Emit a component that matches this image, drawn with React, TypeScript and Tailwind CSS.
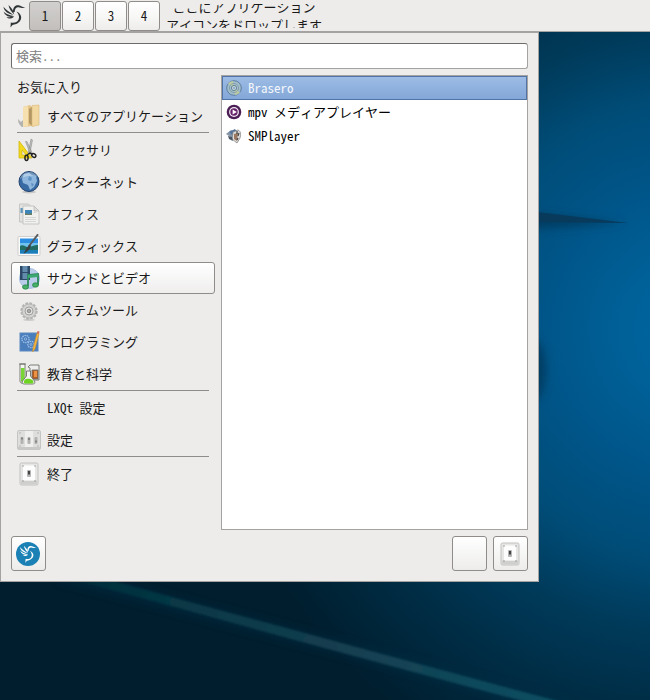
import React, { useState } from "react";

type IconName =
  | "folder" | "tools" | "globe" | "office" | "graphics" | "media" | "gear"
  | "dev" | "science" | "settings" | "exit" | "none";

function Bird({ className, color }: { className: string; color: string }) {
  return (
    <svg viewBox="0 0 24 24" className={className} aria-hidden="true">
      <g fill={color}>
        <path d="M1.500 2.500C3 5.500 7 7.500 11.500 11C7 10 2 8 1.500 2.500z" />
        <path d="M6.500 1C9 3.500 11.500 6 12.200 10.500C9.500 8 7 5 6.500 1z" />
        <path d="M1.600 7.500C4 10.500 8 11 12 12.200C9 14 3 12.500 1.600 7.500z" />
        <path d="M4.500 13C7 13.500 9.500 13.200 12 12.500C10 15 6.500 15.200 4.500 13z" />
        <path d="M11 8C10.800 3.500 13 1 16 1.200C18.200 1.300 19.500 2.800 23.500 3.800C21 4 19 4.200 17.500 3.600C15 2.800 13 4 12.600 8z" />
        <path d="M14.500 7.500C19 9.500 20.500 13.500 18 17C16 20 12.500 20.500 10.500 21L8.500 23.500L8.800 18.500C12 19 14.500 18.500 16 16.500C18 13.500 17 10.500 14.500 7.500z" />
      </g>
    </svg>
  );
}

function Plate() {
  return (
    <g>
      <rect x="3" y="1" width="18" height="22" rx="1.500" fill="#e6e6e5" stroke="#c2c2c1" />
      <rect x="4" y="18.500" width="16" height="4" fill="#cfcfce" />
      <rect x="6" y="3.500" width="12" height="15" fill="#fdfdfd" />
      <rect x="10" y="8" width="4" height="7" rx="1" fill="#b5b5b5" />
      <rect x="11" y="9" width="2" height="3.500" fill="#444" />
      <g fill="#999">
        <circle cx="6" cy="4" r=".8" /><circle cx="18" cy="4" r=".8" />
        <circle cx="6" cy="19" r=".8" /><circle cx="18" cy="19" r=".8" />
      </g>
    </g>
  );
}

function CategoryIcon({ name }: { name: IconName }) {
  return (
    <svg viewBox="0 0 24 24" className="size-6 shrink-0" aria-hidden="true">
      {name === "folder" && (
        <g>
          <path d="M1 15l3 3 3-3v8H5c-3-2-4-5-4-8z" fill="#b2b2b0" />
          <path d="M6 3l7-2 2 2v19l-9 1z" fill="#e6c488" />
          <path d="M6 3l5-1v20l-5 1z" fill="#f6e0b0" />
          <path d="M12 5l3-2v19l-3-3z" fill="#b39765" />
          <path d="M15 1.500l7-.5v20l-7 1.500z" fill="#f3d7a0" stroke="#d9b878" strokeWidth=".6" />
        </g>
      )}
      {name === "tools" && (
        <g>
          <path d="M2 3l13 17H2z" fill="#f2d81e" stroke="#d3b70c" strokeWidth=".8" />
          <path d="M5 12l4 5H5z" fill="#edecea" stroke="#c9ac08" strokeWidth=".6" />
          <path d="M14 1l1.500 1-2.500 13-2 1zM8.500 3.500l1.500 0 5 11-1.500 2z" fill="#b9bcba" stroke="#858886" strokeWidth=".5" />
          <ellipse cx="9.500" cy="19.800" rx="1.600" ry="2.600" fill="none" stroke="#222" strokeWidth="1.500" />
          <ellipse cx="16.800" cy="17.500" rx="2.200" ry="1.700" transform="rotate(35 16.800 17.500)" fill="none" stroke="#222" strokeWidth="1.400" />
          <path d="M10 17l3-2 2 1" stroke="#222" strokeWidth="1.400" fill="none" />
        </g>
      )}
      {name === "globe" && (
        <g>
          <ellipse cx="12" cy="22" rx="7" ry="1.500" fill="#c9c8c6" />
          <circle cx="12" cy="11.500" r="10" fill="#386aa3" stroke="#21436f" />
          <path d="M7 4l5-1 3 2 4 1 1 5-3 6-4 3-2-5-5-2-1-4z" fill="#8fb7dd" />
          <path d="M12 6l3 2-1 3-3-1zM14 13l3 1-2 3z" fill="#5d90c4" />
          <path d="M3 9c1-4 5-7 9-7s7 2 9 5c-5-2-12-2-18 2z" fill="#fff" opacity=".3" />
        </g>
      )}
      {name === "office" && (
        <g stroke="#b8b8b6" strokeWidth=".7">
          <path d="M2.500 2h9l2 2v16h-11z" fill="#e2e2e1" />
          <rect x="3.500" y="6" width="3" height="5" fill="#5e97bd" stroke="none" />
          <path d="M6 4h11l5 5v13H6z" fill="#f0f0ef" />
          <path d="M17 4v5h5z" fill="#dcdcda" />
          <rect x="8" y="8" width="7" height="5" fill="#3d84b8" stroke="none" />
          <path d="M8 11l3 1 4-1v2H8z" fill="#6b7d63" stroke="none" />
          <path d="M8 15.500h11M8 17.500h11M8 19.500h11M16.500 10.500h3" stroke="#ccc" />
        </g>
      )}
      {name === "graphics" && (
        <g>
          <rect x="1" y="2.500" width="22" height="19" rx="1" fill="#fbfbfb" stroke="#cfcfcd" />
          <rect x="3" y="4.500" width="18" height="15" fill="#2c8ee0" />
          <path d="M3 9h18v4H3z" fill="#6fc2ee" />
          <path d="M3 12c3-2 5 1 8 1s6-2 10-2v8H3z" fill="#216c63" />
          <path d="M3 16h18v3.500H3z" fill="#1b7eb8" />
          <path d="M20.500 1L12 12" stroke="#555a5c" strokeWidth="2" strokeLinecap="round" />
          <path d="M13 10.500l-3.500 3.500-3 6 5.500-4 2-4z" fill="#3a3f42" />
        </g>
      )}
      {name === "media" && (
        <g>
          <circle cx="12.500" cy="12.500" r="10" fill="#b9cdeb" stroke="#a5bce0" />
          <path d="M3 0h10v14H3z" fill="#2c4a68" />
          <path d="M5.500 0h5v6h-5zM5.500 7h5v6h-5z" fill="#628bad" />
          <path d="M11 20V9l10-1v11" fill="none" stroke="#2d8a5b" strokeWidth="1.800" />
          <path d="M11 9l10-1v3l-10 1z" fill="#3ba871" />
          <ellipse cx="8.500" cy="21" rx="3" ry="2.200" fill="#45b166" stroke="#237c45" strokeWidth=".7" />
          <ellipse cx="18.500" cy="19" rx="3" ry="2.200" fill="#45b166" stroke="#237c45" strokeWidth=".7" />
        </g>
      )}
      {name === "gear" && (
        <g>
          <ellipse cx="12" cy="21.800" rx="6" ry="1.200" fill="#cfcecc" />
          <circle cx="12" cy="13" r="7.600" fill="#dadad9" stroke="#b4b4b3" strokeWidth="2.200" strokeDasharray="2.600 1.400" />
          <circle cx="12" cy="13" r="7" fill="#d2d2d1" stroke="#ababaa" strokeWidth=".7" />
          <circle cx="12" cy="13" r="4" fill="#e4e4e3" stroke="#a0a09f" />
          <circle cx="12" cy="13" r="1.800" fill="#aaa" stroke="#777" strokeWidth=".7" />
        </g>
      )}
      {name === "dev" && (
        <g>
          <rect x="3" y="3" width="18" height="18" fill="#4a7dbb" stroke="#5b88bf" />
          <g fill="none" stroke="#9dbfe4">
            <circle cx="8.500" cy="9" r="3.600" strokeDasharray="1.500 .7" strokeWidth="1.300" /><circle cx="8.500" cy="9" r="1.200" strokeWidth=".8" />
            <circle cx="14" cy="14.500" r="3.200" strokeDasharray="1.500 .7" strokeWidth="1.200" /><circle cx="14" cy="14.500" r="1" strokeWidth=".8" />
          </g>
          <path d="M20 3l2 1-4 15-2.500 3 .5-4z" fill="#f5b43b" stroke="#c98b2f" strokeWidth=".5" />
          <path d="M20 3l.5-2 2 .5L22 4z" fill="#d86a5a" />
        </g>
      )}
      {name === "science" && (
        <g stroke="#6d706b" strokeWidth=".9">
          <path d="M2 2h7M3 2h5v17c0 3-5 3-5 0V4z" fill="#f4f6f2" />
          <path d="M4 6h3.500v13c0 1.500-3.500 1.500-3.500 0z" fill="#77d534" stroke="none" />
          <path d="M11 5l2-2h9v15h-9V6z" fill="#eee" />
          <path d="M15 8h6v9h-6z" fill="#b45b20" />
          <path d="M17 9h3v6h-3z" fill="#eb9144" stroke="none" />
          <path d="M9.500 9h4v5l4 5c1 2 0 3-2 3h-8c-2 0-3-1-2-3l4-5z" fill="#f2f4ef" />
          <path d="M7.500 18c3-2 5-1 8 0l1 2c0 1.500-1 1.500-2 1.500h-6c-2 0-2-1-1-3.500z" fill="#6dd521" stroke="none" />
        </g>
      )}
      {name === "settings" && (
        <g>
          <rect x=".5" y="2.500" width="23" height="19" rx="1.500" fill="#dededc" stroke="#c5c5c3" />
          <path d="M8 3h8v16H8z" fill="#efefed" />
          <path d="M1 19h22v2.500H1z" fill="#c8c8c6" />
          <g fill="#b3b3b2"><rect x="3.500" y="9" width="3" height="7" rx="1" /><rect x="10.500" y="9" width="3" height="7" rx="1" /><rect x="17.500" y="9" width="3" height="7" rx="1" /></g>
          <path d="M5 9.500v2M12 10v2M19 12.500v2" stroke="#777" strokeWidth="1.500" />
          <g fill="#b0b0af"><circle cx="3" cy="5" r=".8" /><circle cx="21" cy="5" r=".8" /><circle cx="3" cy="18" r=".8" /><circle cx="21" cy="18" r=".8" /></g>
        </g>
      )}
      {name === "exit" && <Plate />}
    </svg>
  );
}

function AppIcon({ name }: { name: string }) {
  return (
    <svg viewBox="0 0 16 16" className="size-4 shrink-0" aria-hidden="true">
      {name === "Brasero" && (
        <g fill="none">
          <circle cx="8" cy="8" r="7.300" fill="#a3bdcb" stroke="#567899" strokeWidth=".9" />
          <path d="M8 8L2 3.500A7 7 0 0 1 7 1z" fill="#bccba5" />
          <path d="M8 8l6 4.500A7 7 0 0 1 9 15z" fill="#bccba5" />
          <circle cx="8" cy="8" r="4.600" stroke="#7393a5" strokeWidth=".7" />
          <circle cx="8" cy="8" r="2.600" fill="#c5d6d6" stroke="#5b7b93" strokeWidth=".9" />
          <circle cx="8" cy="8" r="1" fill="#7ba0c9" />
        </g>
      )}
      {name === "mpv メディアプレイヤー" && (
        <g>
          <circle cx="8" cy="8" r="7.300" fill="#4b1e55" />
          <circle cx="8" cy="8" r="4.900" fill="#f3edf4" />
          <circle cx="8" cy="8" r="3.700" fill="#672169" />
          <path d="M6.600 5.400v5.200L10.800 8z" fill="#fff" />
        </g>
      )}
      {name === "SMPlayer" && (
        <g>
          <path d="M0 6l5-4 5 2-1 8z" fill="#8797a8" />
          <path d="M3 4l6-3 2 3-5 3z" fill="#55779f" />
          <path d="M7 4l5-2c3 1 3 5 2 8l-3 5-5-4z" fill="#ddd" stroke="#777" strokeWidth=".7" />
          <path d="M8 6l4-1-1 8-3-2z" fill="#9b7860" />
          <path d="M11 3v3M13 5l-1 3M12 10l-1 2" stroke="#444" strokeWidth="1.200" />
          <path d="M2 8l4 1 1 4-4-2z" fill="#4a5663" />
        </g>
      )}
    </svg>
  );
}

function Wallpaper() {
  return (
    <svg viewBox="0 0 650 700" preserveAspectRatio="xMidYMid slice" className="absolute inset-0 size-full" aria-hidden="true">
      <defs>
        <radialGradient id="glow" gradientUnits="userSpaceOnUse" cx="690" cy="330" r="480">
          <stop offset="0" stopColor="#0066a0" />
          <stop offset=".13" stopColor="#006199" />
          <stop offset=".31" stopColor="#005588" />
          <stop offset=".48" stopColor="#004c77" />
          <stop offset=".62" stopColor="#003b5b" />
          <stop offset=".8" stopColor="#002c44" />
          <stop offset="1" stopColor="#001e2e" />
        </radialGradient>
        <linearGradient id="ray" gradientUnits="userSpaceOnUse" x1="80" y1="582" x2="560" y2="700">
          <stop offset="0" stopColor="#022c3a" />
          <stop offset=".2" stopColor="#073845" />
          <stop offset=".55" stopColor="#153f50" />
          <stop offset="1" stopColor="#0c4e62" />
        </linearGradient>
        <filter id="soft" x="-50%" y="-50%" width="200%" height="200%"><feGaussianBlur stdDeviation="4" /></filter>
        <filter id="edge"><feGaussianBlur stdDeviation="1" /></filter>
      </defs>
      <rect width="650" height="700" fill="url(#glow)" />
      <path d="M520 212L625 223L520 230z" fill="#013d63" filter="url(#soft)" />
      <path d="M520 210L628 223L520 222z" fill="#083a5c" />
      <ellipse cx="532" cy="370" rx="14" ry="32" fill="#003d63" filter="url(#soft)" />
      <path d="M60 574Q360 654 570 708" fill="none" stroke="#00304a" strokeWidth="14" opacity=".4" filter="url(#soft)" />
      <path d="M60 571Q340 648 570 709" fill="none" stroke="url(#ray)" strokeWidth="9" filter="url(#edge)" />
    </svg>
  );
}

const groups: { icon: IconName; label: string }[][] = [
  [{ icon: "folder", label: "すべてのアプリケーション" }],
  [
    { icon: "tools", label: "アクセサリ" },
    { icon: "globe", label: "インターネット" },
    { icon: "office", label: "オフィス" },
    { icon: "graphics", label: "グラフィックス" },
    { icon: "media", label: "サウンドとビデオ" },
    { icon: "gear", label: "システムツール" },
    { icon: "dev", label: "プログラミング" },
    { icon: "science", label: "教育と科学" },
  ],
  [
    { icon: "none", label: "LXQt 設定" },
    { icon: "settings", label: "設定" },
  ],
  [{ icon: "exit", label: "終了" }],
];

const apps = ["Brasero", "mpv メディアプレイヤー", "SMPlayer"];

const toolButton =
  "flex size-[35px] items-center justify-center rounded-[3px] border border-[#8f8c89] bg-linear-to-b from-white via-[#f6f6f5] to-[#edecea] pr-px";

export default function App() {
  const [desktop, setDesktop] = useState(1);
  const [category, setCategory] = useState("サウンドとビデオ");
  const [app, setApp] = useState("Brasero");
  return (
    <div className="relative flex min-h-screen flex-col items-start overflow-hidden bg-[#001e2e] font-['Noto_Sans_Mono_CJK_JP','Noto_Sans_CJK_JP',monospace] text-[13px] leading-4 text-[#1a1a1a]">
      <Wallpaper />
      <header className="relative flex h-8 w-full items-center border-b border-[#a5a3a1] bg-[#edecea]">
        <button aria-label="メニュー" className="mr-px flex h-full w-7 items-center justify-center">
          <Bird className="size-6" color="#2f3436" />
        </button>
        <nav className="flex gap-px">
          {[1, 2, 3, 4].map((n) => (
            <button
              key={n}
              onClick={() => setDesktop(n)}
              className={`h-[30px] w-8 rounded-[3px] border border-[#8f8c89] bg-linear-to-b ${
                desktop === n ? "from-[#d2d0ce] to-[#c2bfbc]" : "from-white via-[#f8f8f7] to-[#edecea]"
              }`}
            >
              {n}
            </button>
          ))}
        </nav>
        <p className="ml-1 flex h-6 w-[160px] flex-col justify-center overflow-hidden text-center leading-[18px] whitespace-nowrap">
          <span>ここにアプリケーション</span>
          <span>アイコンをドロップします</span>
        </p>
      </header>

      <main className="relative flex w-[539px] max-w-full flex-col gap-1.5 border border-[#a5a3a1] bg-[#edecea] p-2.5">
        <input
          type="text"
          aria-label="検索"
          placeholder="検索..."
          className="h-[26px] w-full rounded-[3px] border border-[#a5a3a1] border-t-[#6e6c6a] border-l-[#6e6c6a] bg-white px-1 pb-0.5 outline-none placeholder:text-[#808080]"
        />
        <div className="flex gap-1.5">
          <nav className="w-[204px] shrink-0">
            <button className="flex h-[25px] w-full items-center px-1.5 pb-0.5">お気に入り</button>
            {groups.map((items, i) => (
              <div key={i}>
                {i > 0 && <hr className="mx-1.5 mb-px border-t border-[#8f8d8b]" />}
                {items.map(({ icon, label }) => (
                  <button
                    key={label}
                    onClick={() => setCategory(label)}
                    className={`flex h-8 w-full items-center gap-1.5 rounded-[3px] border px-[5px] ${
                      category === label
                        ? "border-[#8f8c89] bg-linear-to-b from-white to-[#efeeed]"
                        : "border-transparent"
                    }`}
                  >
                    <CategoryIcon name={icon} />
                    <span>{label}</span>
                  </button>
                ))}
              </div>
            ))}
          </nav>
          <ul className="min-h-[455px] min-w-0 flex-1 border border-[#a5a3a1] bg-white">
            {apps.map((name) => (
              <li key={name}>
                <button
                  onClick={() => setApp(name)}
                  className={`flex h-6 w-full items-center gap-1.5 border px-[3px] ${
                    app === name
                      ? "border-[#4f74a5] bg-linear-to-b from-[#9dbce5] to-[#83a7d8] text-[#f4f7fb]"
                      : "border-transparent text-black"
                  }`}
                >
                  <AppIcon name={name} />
                  <span>{name}</span>
                </button>
              </li>
            ))}
          </ul>
        </div>
        <footer className="flex gap-1.5">
          <button aria-label="LXQt について" className={toolButton}>
            <span className="flex size-6 items-center justify-center rounded-full bg-[#1b81b5]">
              <Bird className="size-[18px]" color="#ffffff" />
            </span>
          </button>
          <span className="flex-1" />
          <button aria-label="ロック" className={toolButton} />
          <button aria-label="終了" className={toolButton}>
            <CategoryIcon name="exit" />
          </button>
        </footer>
      </main>
    </div>
  );
}
